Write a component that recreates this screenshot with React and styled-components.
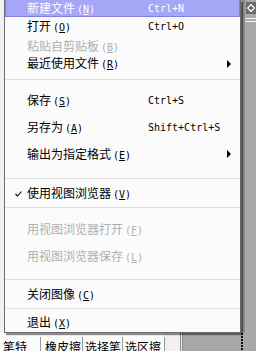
import React from 'react'
import styled, { createGlobalStyle } from 'styled-components'

const GlobalStyle = createGlobalStyle`
  html, body {
    margin: 0;
    padding: 0;
    background: #a8a8a8;
  }
  body {
    font-family: "Noto Sans CJK SC", "Noto Sans", sans-serif;
  }
`

const Page = styled.div`
  position: relative;
  width: 256px;
  height: 351px;
  overflow: hidden;
  display: flex;
  flex-direction: column;
  background: #a8a8a8;
`

const Upper = styled.div`
  height: 333px;
  display: flex;
`

const LeftPane = styled.div`
  width: 183px;
  background: #f2f2f2;
`

const Workspace = styled.div`
  flex: 1;
  background: #a8a8a8;
`

const SideBar = styled.div`
  width: 14px;
  display: flex;
  flex-direction: column;
  background: #a9a9a9;
  border-left: 3px solid #8c8c8c;
  box-sizing: border-box;
  .icon {
    margin: 2px 0 0 1px;
    width: 10px;
    height: 12px;
    background: #6a6a6a;
    display: flex;
    align-items: center;
    justify-content: center;
  }
  .rule {
    height: 1px;
    background: #f4f4f4;
    margin-top: 4px;
  }
  .rule + .rule {
    margin-top: 2px;
  }
`

const Lower = styled.div`
  height: 18px;
  display: flex;
`

const Tabs = styled.div`
  width: 165px;
  display: flex;
  background: #fbfbfb;
  padding-top: 4px;
  box-sizing: border-box;
`

const Tab = styled.div`
  width: ${p => p.w}px;
  padding-left: ${p => p.pad}px;
  padding-top: 3px;
  box-sizing: border-box;
  border-right: 1px solid #9a9a9a;
  font-size: 12px;
  line-height: 14px;
  color: #000;
  white-space: nowrap;
`

const Filler = styled.div`
  width: 15px;
  background: #f0f0f0;
  border-right: 3px double #8a8a8a;
`

const Canvas = styled.div`
  flex: 1;
  background: #a8a8a8;
  padding-left: 58px;
  .dots {
    width: 2px;
    height: 100%;
    background: repeating-linear-gradient(#111 0 2px, transparent 2px 3px);
  }
`

const Menu = styled.div`
  position: absolute;
  left: 4px;
  top: 0;
  width: 237px;
  box-sizing: border-box;
  padding-bottom: 2px;
  display: flex;
  flex-direction: column;
  background: #fbfbfb;
  border: 1px solid #6c6c6c;
  border-top: none;
  box-shadow: 2px 2px 1px rgba(0, 0, 0, 0.45);
`

const Item = styled.div`
  height: ${p => p.h}px;
  box-sizing: border-box;
  display: grid;
  grid-template-columns: 21px 121px 79px 1fr;
  align-items: center;
  font-size: 12px;
  white-space: nowrap;
  color: ${p => (p.active ? '#fff' : p.disabled ? '#b0b0b0' : '#000')};
  background: ${p => (p.active ? '#a6a6f6' : 'transparent')};
  border: 1px solid ${p => (p.active ? '#7e7ee6' : 'transparent')};
  border-top: none;
`

const Check = styled.span`
  display: flex;
  padding-left: 9px;
`

const Label = styled.span`
  line-height: 13px;
  .key {
    font-family: "DejaVu Sans Mono", monospace;
    font-size: 10px;
    margin-left: 2px;
  }
  u {
    text-underline-offset: 1px;
  }
`

const Shortcut = styled.span`
  font-family: "DejaVu Sans Mono", "Liberation Mono", monospace;
  font-size: 10px;
  line-height: 13px;
`

const Arrow = styled.span`
  width: 0;
  height: 0;
  border-left: 4px solid #000;
  border-top: 4px solid transparent;
  border-bottom: 4px solid transparent;
`

const Separator = styled.div`
  height: 1px;
  background: #dedede;
  margin: ${p => p.top}px 0 ${p => p.bottom}px;
`

const rows = [
  { type: 'item', h: 17, label: '新建文件', key: 'N', shortcut: 'Ctrl+N', active: true },
  { type: 'item', h: 20, label: '打开', key: 'O', shortcut: 'Ctrl+O' },
  { type: 'item', h: 19, label: '粘贴自剪贴板', key: 'B', disabled: true },
  { type: 'item', h: 16, label: '最近使用文件', key: 'R', sub: true },
  { type: 'sep', top: 7, bottom: 7 },
  { type: 'item', h: 28, label: '保存', key: 'S', shortcut: 'Ctrl+S' },
  { type: 'item', h: 26, label: '另存为', key: 'A', shortcut: 'Shift+Ctrl+S' },
  { type: 'item', h: 27, label: '输出为指定格式', key: 'E', sub: true },
  { type: 'sep', top: 10, bottom: 7 },
  { type: 'item', h: 15, label: '使用视图浏览器', key: 'V', checked: true },
  { type: 'sep', top: 6, bottom: 7 },
  { type: 'item', h: 29, label: '用视图浏览器打开', key: 'F', disabled: true },
  { type: 'item', h: 26, label: '用视图浏览器保存', key: 'L', disabled: true },
  { type: 'sep', top: 9, bottom: 7 },
  { type: 'item', h: 14, label: '关闭图像', key: 'C' },
  { type: 'sep', top: 7, bottom: 6 },
  { type: 'item', h: 15, label: '退出', key: 'X' },
]

const CheckMark = () => (
  <svg width="7" height="6" viewBox="0 0 7 6">
    <polyline points="0.5,3 2.5,5 6.5,0.5" fill="none" stroke="#000" strokeWidth="1.1" />
  </svg>
)

const App = () => {
  return (
    <>
      <GlobalStyle />
      <Page>
        <Upper>
          <LeftPane />
          <Workspace />
          <SideBar>
            <div className="icon">
              <svg width="8" height="8" viewBox="0 0 8 8">
                <path d="M4 0.5 L7.5 4 L4 7.5 L0.5 4 Z" fill="none" stroke="#fff" strokeWidth="1.2" />
              </svg>
            </div>
            <div className="rule" />
            <div className="rule" />
          </SideBar>
        </Upper>
        <Lower>
          <Tabs>
            <Tab w={41} pad={3}>笔特</Tab>
            <Tab w={42} pad={4}>橡皮擦</Tab>
            <Tab w={40} pad={2}>选择笔</Tab>
            <Tab w={42} pad={2}>选区擦</Tab>
          </Tabs>
          <Filler />
          <Canvas>
            <div className="dots" />
          </Canvas>
        </Lower>

        <Menu>
          {rows.map((r, i) =>
            r.type === 'sep' ? (
              <Separator key={i} top={r.top} bottom={r.bottom} />
            ) : (
              <Item key={i} h={r.h} active={r.active} disabled={r.disabled}>
                <Check>{r.checked && <CheckMark />}</Check>
                <Label>
                  {r.label}
                  <span className="key">(<u>{r.key}</u>)</span>
                </Label>
                <Shortcut>{r.shortcut}</Shortcut>
                {r.sub ? <Arrow /> : <span />}
              </Item>
            )
          )}
        </Menu>
      </Page>
    </>
  )
}

export default App
